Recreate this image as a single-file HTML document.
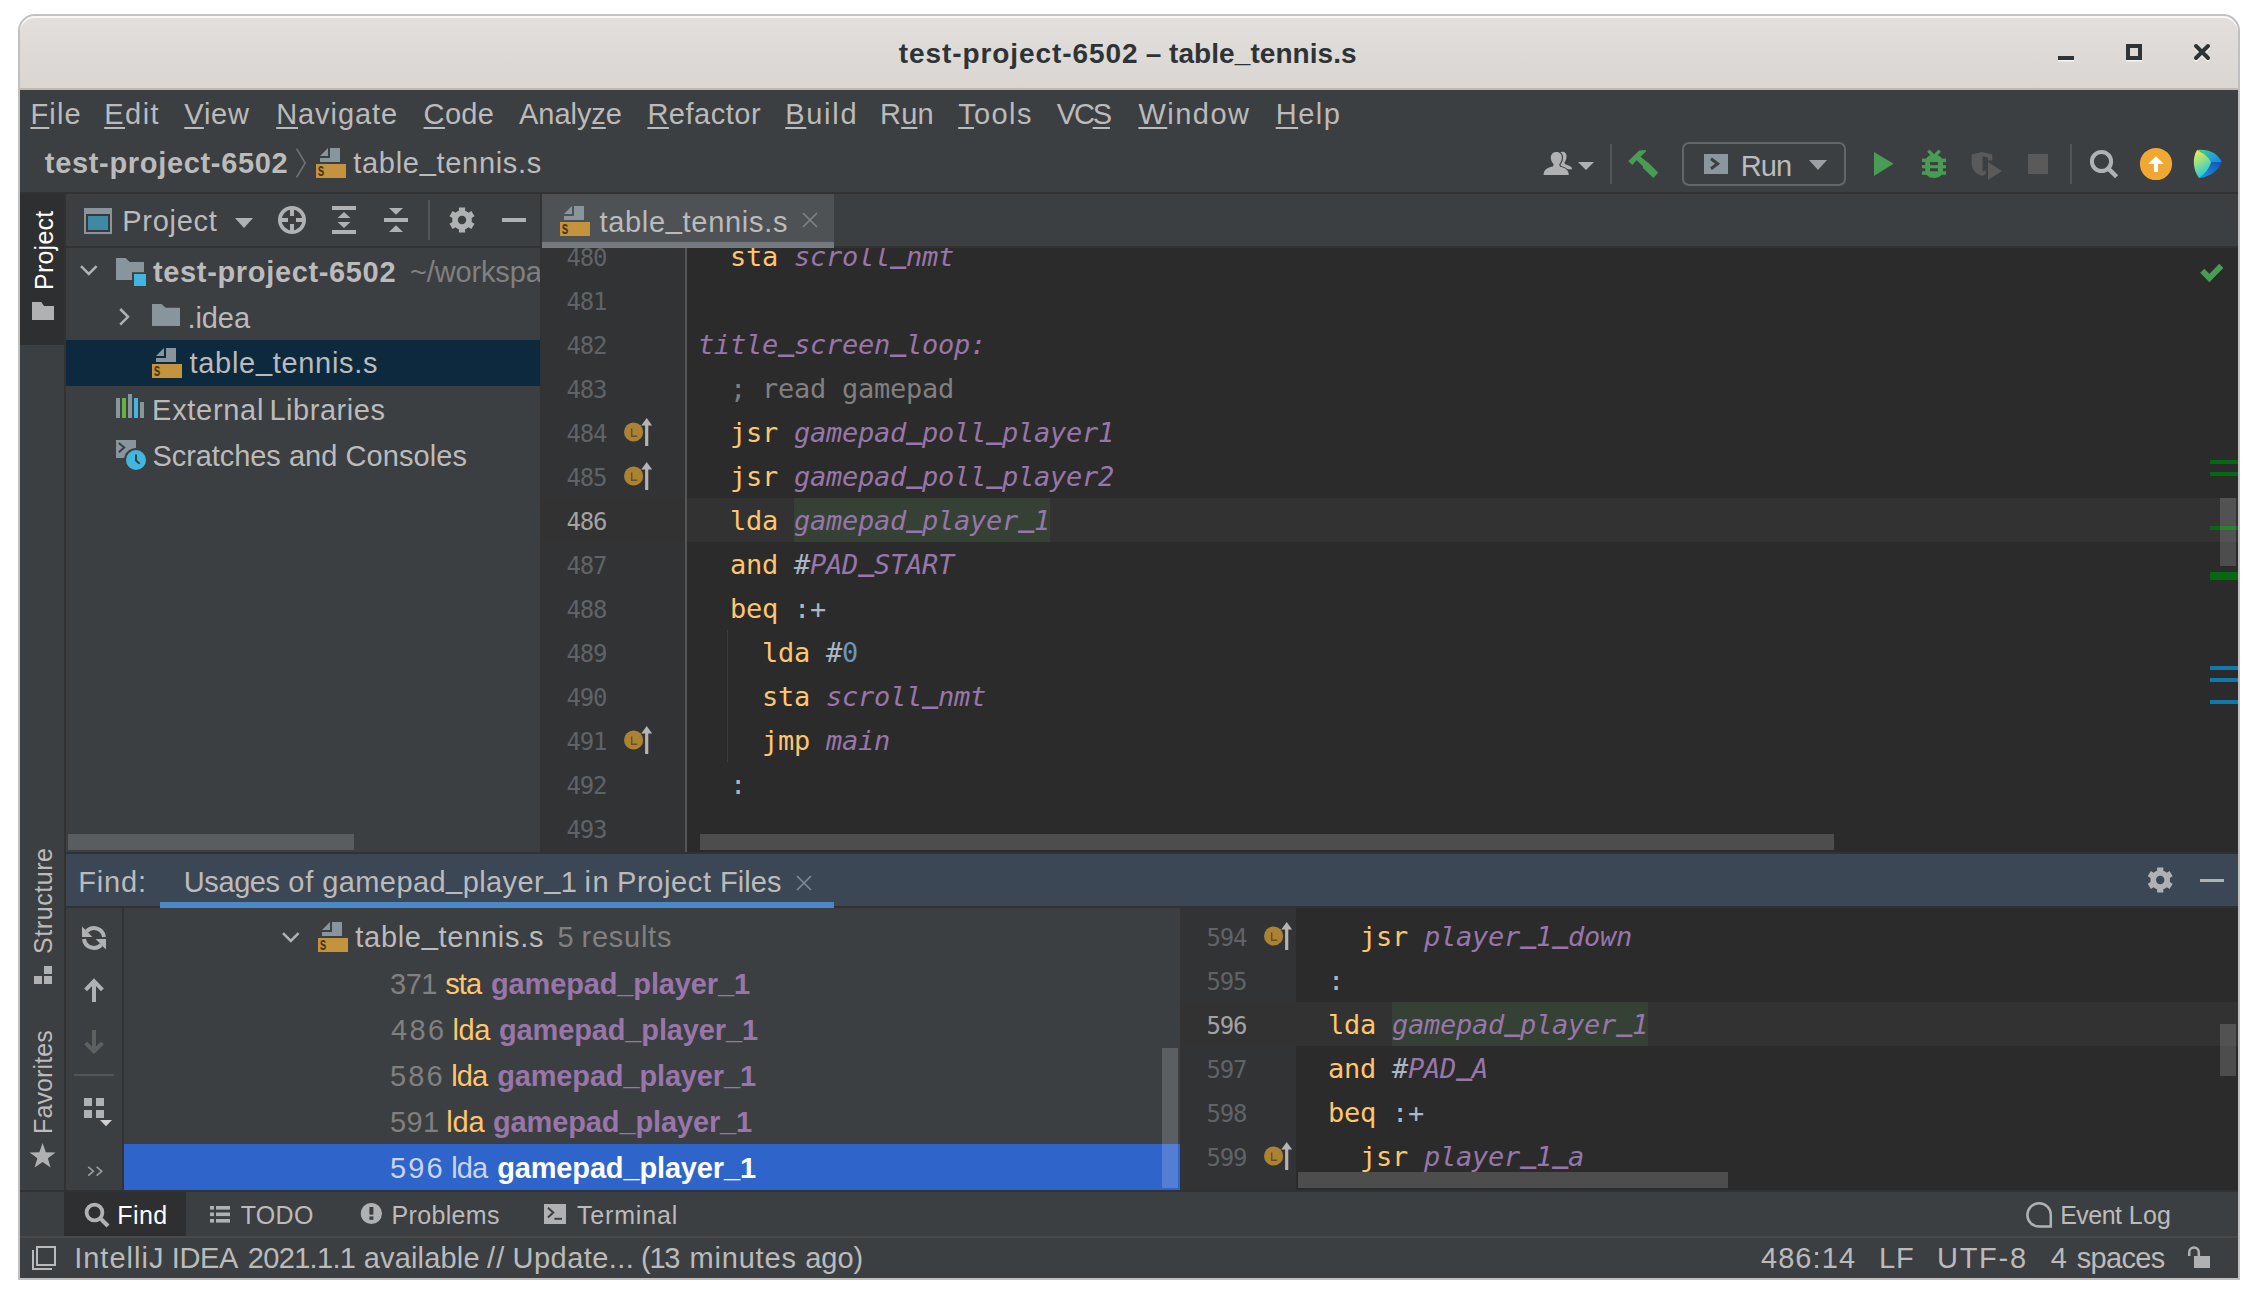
<!DOCTYPE html>
<html lang="en"><head><meta charset="utf-8"><title>test-project-6502 – table_tennis.s</title>
<style>
html,body{margin:0;padding:0;background:#fff;}
body{width:2258px;height:1298px;position:relative;overflow:hidden;font-family:"Liberation Sans", sans-serif;}
.r,.t,.i,.c{position:absolute;}
.t{white-space:pre;line-height:1;}
.t u{text-decoration:underline;text-decoration-thickness:2px;text-underline-offset:3px;}
.us{position:relative;top:-3.5px;}
.ub{position:relative;top:-1px;}
.um{position:relative;top:-2.5px;font-weight:bold;}
.i{overflow:visible;}
.c{overflow:hidden;}
</style></head>
<body>
<div class="r" style="left:18px;top:14px;width:2222px;height:1266px;background:#c0c0c0;border-radius:17px 17px 0 0;"></div>
<div class="r" style="left:20px;top:16px;width:2218px;height:72px;border-radius:15px 15px 0 0;background:linear-gradient(#e2dfdc,#dad6d2);box-shadow:inset 0 2px 0 #f8f7f6;"></div>
<div class="r" style="left:20px;top:88px;width:2218px;height:2px;background:#c0b9b0;"></div>
<div class="r" style="left:20px;top:90px;width:2218px;height:1188px;background:#3c3f41;"></div>
<span class="t" style="font-size:28px;color:#2e3436;font-weight:bold;letter-spacing:0.912px;left:898.80px;top:40.20px;">test-project-6502</span>
<span class="t" style="font-size:28px;color:#2e3436;font-weight:bold;left:1145.70px;top:40.20px;">–</span>
<span class="t" style="font-size:28px;color:#2e3436;font-weight:bold;letter-spacing:0.072px;left:1169.00px;top:40.20px;">table<span class="ub">_</span>tennis.s</span>
<svg class="i" style="left:0;top:0" width="2258" height="1298" viewBox="0 0 2258 1298"><rect x="2058" y="57.5" width="16" height="4" fill="#f7f6f5"/><rect x="2058" y="56" width="16" height="4" fill="#2e3436"/><rect x="2128" y="47.5" width="12" height="12" fill="none" stroke="#f7f6f5" stroke-width="4"/><rect x="2128" y="46" width="12" height="12" fill="#dedbd7" stroke="#2e3436" stroke-width="4"/><path d="M2196,47.5 L2208,59.5 M2208,47.5 L2196,59.5" stroke="#f7f6f5" stroke-width="4" stroke-linecap="round"/><path d="M2196,46 L2208,58 M2208,46 L2196,58" stroke="#2e3436" stroke-width="4" stroke-linecap="round"/></svg>
<span class="t" style="font-size:29px;color:#bbbbbb;letter-spacing:1.167px;left:30.40px;top:99.50px;"><u>F</u>ile</span>
<span class="t" style="font-size:29px;color:#bbbbbb;letter-spacing:1.495px;left:104.20px;top:99.50px;"><u>E</u>dit</span>
<span class="t" style="font-size:29px;color:#bbbbbb;letter-spacing:0.77px;left:184.30px;top:99.50px;"><u>V</u>iew</span>
<span class="t" style="font-size:29px;color:#bbbbbb;letter-spacing:0.925px;left:276.20px;top:99.50px;"><u>N</u>avigate</span>
<span class="t" style="font-size:29px;color:#bbbbbb;letter-spacing:0.333px;left:423.60px;top:99.50px;"><u>C</u>ode</span>
<span class="t" style="font-size:29px;color:#bbbbbb;letter-spacing:-0.04px;left:519.00px;top:99.50px;">Analy<u>z</u>e</span>
<span class="t" style="font-size:29px;color:#bbbbbb;letter-spacing:0.523px;left:647.40px;top:99.50px;"><u>R</u>efactor</span>
<span class="t" style="font-size:29px;color:#bbbbbb;letter-spacing:1.711px;left:785.20px;top:99.50px;"><u>B</u>uild</span>
<span class="t" style="font-size:29px;color:#bbbbbb;letter-spacing:0.114px;left:880.10px;top:99.50px;">R<u>u</u>n</span>
<span class="t" style="font-size:29px;color:#bbbbbb;letter-spacing:1.375px;left:958.20px;top:99.50px;"><u>T</u>ools</span>
<span class="t" style="font-size:29px;color:#bbbbbb;letter-spacing:-2.143px;left:1056.70px;top:99.50px;">VC<u>S</u></span>
<span class="t" style="font-size:29px;color:#bbbbbb;letter-spacing:1.48px;left:1138.40px;top:99.50px;"><u>W</u>indow</span>
<span class="t" style="font-size:29px;color:#bbbbbb;letter-spacing:1.495px;left:1275.70px;top:99.50px;"><u>H</u>elp</span>
<span class="t" style="font-size:29px;color:#bbbbbb;font-weight:bold;letter-spacing:0.678px;left:44.80px;top:149.00px;">test-project-6502</span>
<svg class="i" style="left:0;top:0" width="2258" height="1298" viewBox="0 0 2258 1298"><path d="M296.6,148.6 L305.2,163 L296.6,177.4" fill="none" stroke="#6c7378" stroke-width="1.6"/></svg>
<svg class="i" style="left:316px;top:148px;" width="30" height="30" viewBox="0 0 30 30"><path d="M14,0 H24 V14 H4 V10 H14 Z" fill="#89959d"/><path d="M4,8 L12,0 V8 Z" fill="#89959d"/><rect x="0" y="16" width="30" height="14" fill="#c4933e"/><text x="1.7" y="27.8" font-family="Liberation Sans, sans-serif" font-weight="bold" font-size="17.5" textLength="6.6" lengthAdjust="spacingAndGlyphs" fill="#4a3714">s</text></svg>
<span class="t" style="font-size:29px;color:#bbbbbb;letter-spacing:0.696px;left:353.30px;top:149.00px;">table<span class="us">_</span>tennis.s</span>
<svg class="i" style="left:0;top:0" width="2258" height="1298" viewBox="0 0 2258 1298"><path d="M1559.5,152.6 C1560.8,151.9 1562,151.7 1563,151.8 C1565.6,152 1566.8,154.2 1566.5,157.2 C1566.3,159.2 1565.6,161 1564.6,162.4 C1564.4,163.6 1565,164.2 1566,164.6 C1570,165.8 1572.1,167 1572.1,169.2 L1560,169.2 Z" fill="#afb1b3"/><path d="M1543.6,175 C1543.6,170.2 1546.5,168.2 1552.6,166.6 C1553.8,165.8 1553.8,164.6 1553.1,163.6 C1551.3,161.6 1550.6,158.8 1550.8,156.8 C1551.1,153.8 1553.4,152 1556.3,152 C1559.3,152 1561.7,154 1561.9,157 C1562.1,159.5 1561.1,162 1559.6,163.8 C1559.1,165 1559.3,166 1560.3,166.8 C1565.4,168 1568.8,170 1568.8,175 Z" fill="#afb1b3" stroke="#3c3f41" stroke-width="2.4" paint-order="stroke"/><path d="M1578,162 H1594 L1586,170 Z" fill="#afb1b3"/><rect x="1610" y="144" width="2" height="40" fill="#555555"/><path d="M1628.3,161 L1639.2,150.4 L1646.1,149.9 L1645.8,151.5 L1640.6,156.7 L1647.3,162.2 L1648.7,163 L1658.2,172.8 L1653.3,178 L1643.2,168.2 L1642.9,166.2 L1636.6,160.2 L1632.3,165 Z" fill="#499c54"/><rect x="1683" y="143" width="162" height="42" rx="6" ry="6" fill="none" stroke="#646768" stroke-width="2"/><rect x="1704" y="154" width="24" height="20" fill="#8a979f"/><path d="M1711,158.8 L1717.6,163.8 L1711,168.8" fill="none" stroke="#3c3f41" stroke-width="3"/><path d="M1809,160 H1827 L1818,170 Z" fill="#9da0a4"/><path d="M1874,152 V176 L1893.6,163.8 Z" fill="#499c54"/><path d="M1928.4,150.6 L1934,156.6 L1939.7,150.6" fill="none" stroke="#499c54" stroke-width="3.3"/><path d="M1925.2,163.6 C1925.2,157.6 1929,154.6 1934,154.6 C1939,154.6 1943,157.6 1943,163.6 L1943,170 C1943,175 1939,178 1934,178 C1929,178 1925.2,175 1925.2,170 Z" fill="#499c54"/><rect x="1922" y="158.6" width="24" height="3.5" fill="#499c54"/><rect x="1922" y="165.1" width="24" height="3.2" fill="#499c54"/><rect x="1922" y="171.3" width="24" height="3.5" fill="#499c54"/><rect x="1930" y="162.1" width="8" height="3" fill="#3c3f41"/><rect x="1930" y="168.3" width="8" height="3" fill="#3c3f41"/><path d="M1971.7,154.4 L1982,152 L1992.2,154.4 L1992.2,160.4 L1988,160.4 L1988,157.4 L1982.5,156.3 L1982.5,171.5 L1985.8,170 L1985.8,174 L1982,176 C1975,173.5 1971.7,169 1971.7,164 Z" fill="#5a5a5a"/><path d="M1988,162 V180 L2001.8,171 Z" fill="#5a5a5a"/><rect x="2028" y="154" width="20" height="20" fill="#5a5a5a"/><rect x="2070" y="144" width="2" height="40" fill="#555555"/><circle cx="2101.5" cy="161.5" r="9.6" fill="none" stroke="#afb1b3" stroke-width="4"/><path d="M2108.4,168.6 L2116.6,176.8" stroke="#afb1b3" stroke-width="4.4"/><circle cx="2156" cy="164" r="16.1" fill="#f1a832"/><path d="M2148,164 L2156,156.2 L2164,164 H2158 V172 H2154 V164 Z" fill="#ffffff"/><defs><linearGradient id="lg1" x1="0" y1="0" x2="0.4" y2="1"><stop offset="0" stop-color="#f9f047"/><stop offset="0.5" stop-color="#8fdf8a"/><stop offset="1" stop-color="#21c8e8"/></linearGradient><linearGradient id="lg2" x1="0" y1="0" x2="1" y2="0.6"><stop offset="0" stop-color="#3ddc84"/><stop offset="1" stop-color="#168df0"/></linearGradient><linearGradient id="lg3" x1="1" y1="0" x2="0" y2="1"><stop offset="0" stop-color="#1a4fb5"/><stop offset="1" stop-color="#169be6"/></linearGradient></defs><path d="M2197,150 C2210,149 2218,154 2221.8,162 L2211,162 C2208,156 2203,152.5 2197,150 Z" fill="url(#lg2)"/><path d="M2221.8,162 C2218,171 2210,177 2199,178 C2205,174 2209.5,168.5 2211,162 Z" fill="url(#lg3)"/><path d="M2197,150 C2203,152.5 2209,157 2211,162 C2209.5,168.5 2205,174 2199,178 C2193,170 2192,158 2197,150 Z" fill="url(#lg1)"/></svg>
<span class="t" style="font-size:29px;color:#bbbbbb;letter-spacing:-0.836px;left:1740.70px;top:151.60px;">Run</span>
<div class="r" style="left:20px;top:192px;width:2218px;height:2px;background:#323232;"></div>
<div class="r" style="left:66px;top:340px;width:474px;height:46px;background:#0d293e;"></div>
<svg class="i" style="left:0;top:0" width="2258" height="1298" viewBox="0 0 2258 1298"><path d="M81.0,266.2 L88.8,274 L96.6,266.2" fill="none" stroke="#afb1b3" stroke-width="2.5"/></svg>
<svg class="i" style="left:116px;top:258px;" width="30" height="28" viewBox="0 0 30 28"><path d="M0,0 H9.5 L13.7,4 H28 V14.2 H16 V22 H0 Z" fill="#89959d"/><rect x="18" y="16" width="12" height="12" fill="#40b6e0"/></svg>
<span class="t" style="font-size:29px;color:#bbbbbb;font-weight:bold;letter-spacing:0.653px;left:153.00px;top:257.50px;">test-project-6502</span>
<span class="t" style="font-size:29px;color:#808080;letter-spacing:-0.148px;left:410.00px;top:257.50px;">~/workspace</span>
<svg class="i" style="left:0;top:0" width="2258" height="1298" viewBox="0 0 2258 1298"><path d="M120.2,309.0 L128,316.8 L120.2,324.6" fill="none" stroke="#afb1b3" stroke-width="2.5"/></svg>
<svg class="i" style="left:152px;top:304px;" width="28" height="22" viewBox="0 0 28 22"><path d="M0,0 H9.5 L13.7,3.8 H28 V22 H0 Z" fill="#89959d"/></svg>
<span class="t" style="font-size:29px;color:#bbbbbb;letter-spacing:-0.089px;left:187.50px;top:304.00px;">.idea</span>
<svg class="i" style="left:152px;top:348px;" width="30" height="30" viewBox="0 0 30 30"><path d="M14,0 H24 V14 H4 V10 H14 Z" fill="#89959d"/><path d="M4,8 L12,0 V8 Z" fill="#89959d"/><rect x="0" y="16" width="30" height="14" fill="#c4933e"/><text x="1.7" y="27.8" font-family="Liberation Sans, sans-serif" font-weight="bold" font-size="17.5" textLength="6.6" lengthAdjust="spacingAndGlyphs" fill="#4a3714">s</text></svg>
<span class="t" style="font-size:29px;color:#bbbbbb;letter-spacing:0.696px;left:189.50px;top:349.00px;">table<span class="us">_</span>tennis.s</span>
<svg class="i" style="left:0;top:0" width="2258" height="1298" viewBox="0 0 2258 1298"><rect x="116" y="398" width="4" height="20" fill="#89959d"/><rect x="122" y="398" width="4" height="20" fill="#62b543"/><rect x="128" y="394" width="4" height="24" fill="#89959d"/><rect x="134" y="398" width="4" height="20" fill="#40b6e0"/><rect x="140" y="402" width="4" height="16" fill="#89959d"/></svg>
<span class="t" style="font-size:29px;color:#bbbbbb;letter-spacing:0.694px;left:152.10px;top:396.30px;">External</span>
<span class="t" style="font-size:29px;color:#bbbbbb;letter-spacing:0.536px;left:269.40px;top:396.30px;">Libraries</span>
<svg class="i" style="left:0;top:0" width="2258" height="1298" viewBox="0 0 2258 1298"><rect x="116" y="440" width="20" height="18" fill="#89959d"/><path d="M118.8,443 L124.2,447.6 L118.8,452.2" fill="none" stroke="#3c3f41" stroke-width="2"/><circle cx="136" cy="460" r="12" fill="#3c3f41"/><circle cx="136" cy="460" r="10" fill="#40b6e0"/><path d="M136,454.6 V460.6 L139.6,463.8" fill="none" stroke="#3c3f41" stroke-width="2"/></svg>
<span class="t" style="font-size:29px;color:#bbbbbb;letter-spacing:-0.093px;left:152.50px;top:441.50px;">Scratches</span>
<span class="t" style="font-size:29px;color:#bbbbbb;letter-spacing:-0.028px;left:289.00px;top:441.50px;">and</span>
<span class="t" style="font-size:29px;color:#bbbbbb;letter-spacing:0.1px;left:345.40px;top:441.50px;">Consoles</span>
<div class="r" style="left:68px;top:834px;width:286px;height:16px;background:#5a5d5f;"></div>
<div class="r" style="left:540px;top:194px;width:2px;height:658px;background:#323232;"></div>
<div class="r" style="left:542px;top:248px;width:144px;height:604px;background:#313335;"></div>
<div class="r" style="left:686px;top:248px;width:1552px;height:604px;background:#2b2b2b;"></div>
<div class="r" style="left:685px;top:248px;width:2px;height:604px;background:#555555;"></div>
<div class="r" style="left:542px;top:498px;width:143px;height:44px;background:#323232;"></div>
<div class="r" style="left:687px;top:498px;width:1551px;height:44px;background:#323232;"></div>
<div class="r" style="left:794px;top:498px;width:256px;height:44px;background:#344134;"></div>
<div class="r" style="left:727px;top:630px;width:1px;height:132px;background:#3b3b3b;"></div>
<span class="t" style="font-size:24px;color:#606366;font-family:'DejaVu Sans Mono', 'Liberation Mono', monospace;letter-spacing:-1.199px;left:566.50px;top:245.60px;">480</span>
<span class="t" style="font-size:27px;color:#ffc66d;font-family:'DejaVu Sans Mono', 'Liberation Mono', monospace;letter-spacing:-0.255px;left:730.00px;top:242.50px;">sta</span>
<span class="t" style="font-size:27px;color:#9876aa;font-family:'DejaVu Sans Mono', 'Liberation Mono', monospace;font-style:italic;letter-spacing:-0.255px;left:794.00px;top:242.50px;">scroll<span class="um">_</span>nmt</span>
<span class="t" style="font-size:24px;color:#606366;font-family:'DejaVu Sans Mono', 'Liberation Mono', monospace;letter-spacing:-1.199px;left:566.50px;top:289.60px;">481</span>
<span class="t" style="font-size:24px;color:#606366;font-family:'DejaVu Sans Mono', 'Liberation Mono', monospace;letter-spacing:-1.199px;left:566.50px;top:333.60px;">482</span>
<span class="t" style="font-size:27px;color:#9876aa;font-family:'DejaVu Sans Mono', 'Liberation Mono', monospace;font-style:italic;letter-spacing:-0.255px;left:698.00px;top:330.50px;">title<span class="um">_</span>screen<span class="um">_</span>loop:</span>
<span class="t" style="font-size:24px;color:#606366;font-family:'DejaVu Sans Mono', 'Liberation Mono', monospace;letter-spacing:-1.199px;left:566.50px;top:377.60px;">483</span>
<span class="t" style="font-size:27px;color:#808080;font-family:'DejaVu Sans Mono', 'Liberation Mono', monospace;letter-spacing:-0.255px;left:730.00px;top:374.50px;">; read gamepad</span>
<span class="t" style="font-size:24px;color:#606366;font-family:'DejaVu Sans Mono', 'Liberation Mono', monospace;letter-spacing:-1.199px;left:566.50px;top:421.60px;">484</span>
<span class="t" style="font-size:27px;color:#ffc66d;font-family:'DejaVu Sans Mono', 'Liberation Mono', monospace;letter-spacing:-0.255px;left:730.00px;top:418.50px;">jsr</span>
<span class="t" style="font-size:27px;color:#9876aa;font-family:'DejaVu Sans Mono', 'Liberation Mono', monospace;font-style:italic;letter-spacing:-0.255px;left:794.00px;top:418.50px;">gamepad<span class="um">_</span>poll<span class="um">_</span>player1</span>
<span class="t" style="font-size:24px;color:#606366;font-family:'DejaVu Sans Mono', 'Liberation Mono', monospace;letter-spacing:-1.199px;left:566.50px;top:465.60px;">485</span>
<span class="t" style="font-size:27px;color:#ffc66d;font-family:'DejaVu Sans Mono', 'Liberation Mono', monospace;letter-spacing:-0.255px;left:730.00px;top:462.50px;">jsr</span>
<span class="t" style="font-size:27px;color:#9876aa;font-family:'DejaVu Sans Mono', 'Liberation Mono', monospace;font-style:italic;letter-spacing:-0.255px;left:794.00px;top:462.50px;">gamepad<span class="um">_</span>poll<span class="um">_</span>player2</span>
<span class="t" style="font-size:24px;color:#a4a3a3;font-family:'DejaVu Sans Mono', 'Liberation Mono', monospace;letter-spacing:-1.199px;left:566.50px;top:509.60px;">486</span>
<span class="t" style="font-size:27px;color:#ffc66d;font-family:'DejaVu Sans Mono', 'Liberation Mono', monospace;letter-spacing:-0.255px;left:730.00px;top:506.50px;">lda</span>
<span class="t" style="font-size:27px;color:#9876aa;font-family:'DejaVu Sans Mono', 'Liberation Mono', monospace;font-style:italic;letter-spacing:-0.255px;left:794.00px;top:506.50px;">gamepad<span class="um">_</span>player<span class="um">_</span>1</span>
<span class="t" style="font-size:24px;color:#606366;font-family:'DejaVu Sans Mono', 'Liberation Mono', monospace;letter-spacing:-1.199px;left:566.50px;top:553.60px;">487</span>
<span class="t" style="font-size:27px;color:#ffc66d;font-family:'DejaVu Sans Mono', 'Liberation Mono', monospace;letter-spacing:-0.255px;left:730.00px;top:550.50px;">and</span>
<span class="t" style="font-size:27px;color:#a9b7c6;font-family:'DejaVu Sans Mono', 'Liberation Mono', monospace;letter-spacing:-0.255px;left:794.00px;top:550.50px;">#</span>
<span class="t" style="font-size:27px;color:#9876aa;font-family:'DejaVu Sans Mono', 'Liberation Mono', monospace;font-style:italic;letter-spacing:-0.255px;left:810.00px;top:550.50px;">PAD<span class="um">_</span>START</span>
<span class="t" style="font-size:24px;color:#606366;font-family:'DejaVu Sans Mono', 'Liberation Mono', monospace;letter-spacing:-1.199px;left:566.50px;top:597.60px;">488</span>
<span class="t" style="font-size:27px;color:#ffc66d;font-family:'DejaVu Sans Mono', 'Liberation Mono', monospace;letter-spacing:-0.255px;left:730.00px;top:594.50px;">beq</span>
<span class="t" style="font-size:27px;color:#a9b7c6;font-family:'DejaVu Sans Mono', 'Liberation Mono', monospace;letter-spacing:-0.255px;left:794.00px;top:594.50px;">:+</span>
<span class="t" style="font-size:24px;color:#606366;font-family:'DejaVu Sans Mono', 'Liberation Mono', monospace;letter-spacing:-1.199px;left:566.50px;top:641.60px;">489</span>
<span class="t" style="font-size:27px;color:#ffc66d;font-family:'DejaVu Sans Mono', 'Liberation Mono', monospace;letter-spacing:-0.255px;left:762.00px;top:638.50px;">lda</span>
<span class="t" style="font-size:27px;color:#a9b7c6;font-family:'DejaVu Sans Mono', 'Liberation Mono', monospace;letter-spacing:-0.255px;left:826.00px;top:638.50px;">#</span>
<span class="t" style="font-size:27px;color:#6897bb;font-family:'DejaVu Sans Mono', 'Liberation Mono', monospace;letter-spacing:-0.255px;left:842.00px;top:638.50px;">0</span>
<span class="t" style="font-size:24px;color:#606366;font-family:'DejaVu Sans Mono', 'Liberation Mono', monospace;letter-spacing:-1.199px;left:566.50px;top:685.60px;">490</span>
<span class="t" style="font-size:27px;color:#ffc66d;font-family:'DejaVu Sans Mono', 'Liberation Mono', monospace;letter-spacing:-0.255px;left:762.00px;top:682.50px;">sta</span>
<span class="t" style="font-size:27px;color:#9876aa;font-family:'DejaVu Sans Mono', 'Liberation Mono', monospace;font-style:italic;letter-spacing:-0.255px;left:826.00px;top:682.50px;">scroll<span class="um">_</span>nmt</span>
<span class="t" style="font-size:24px;color:#606366;font-family:'DejaVu Sans Mono', 'Liberation Mono', monospace;letter-spacing:-1.199px;left:566.50px;top:729.60px;">491</span>
<span class="t" style="font-size:27px;color:#ffc66d;font-family:'DejaVu Sans Mono', 'Liberation Mono', monospace;letter-spacing:-0.255px;left:762.00px;top:726.50px;">jmp</span>
<span class="t" style="font-size:27px;color:#9876aa;font-family:'DejaVu Sans Mono', 'Liberation Mono', monospace;font-style:italic;letter-spacing:-0.255px;left:826.00px;top:726.50px;">main</span>
<span class="t" style="font-size:24px;color:#606366;font-family:'DejaVu Sans Mono', 'Liberation Mono', monospace;letter-spacing:-1.199px;left:566.50px;top:773.60px;">492</span>
<span class="t" style="font-size:27px;color:#a9b7c6;font-family:'DejaVu Sans Mono', 'Liberation Mono', monospace;letter-spacing:-0.255px;left:730.00px;top:770.50px;">:</span>
<span class="t" style="font-size:24px;color:#606366;font-family:'DejaVu Sans Mono', 'Liberation Mono', monospace;letter-spacing:-1.199px;left:566.50px;top:817.60px;">493</span>
<svg class="i" style="left:0;top:0" width="2258" height="1298" viewBox="0 0 2258 1298"><circle cx="633.6" cy="432" r="9.6" fill="#ab8233"/><path d="M631.7,428.6 V436.2 H637.2" fill="none" stroke="#65501f" stroke-width="1.4"/><rect x="645.1" y="423" width="3.2" height="23" fill="#b4b4b4"/><path d="M641.3000000000001,425.6 L646.7,418 L652.1,425.6 Z" fill="#b4b4b4"/></svg>
<svg class="i" style="left:0;top:0" width="2258" height="1298" viewBox="0 0 2258 1298"><circle cx="633.6" cy="476" r="9.6" fill="#ab8233"/><path d="M631.7,472.6 V480.2 H637.2" fill="none" stroke="#65501f" stroke-width="1.4"/><rect x="645.1" y="467" width="3.2" height="23" fill="#b4b4b4"/><path d="M641.3000000000001,469.6 L646.7,462 L652.1,469.6 Z" fill="#b4b4b4"/></svg>
<svg class="i" style="left:0;top:0" width="2258" height="1298" viewBox="0 0 2258 1298"><circle cx="633.6" cy="740" r="9.6" fill="#ab8233"/><path d="M631.7,736.6 V744.2 H637.2" fill="none" stroke="#65501f" stroke-width="1.4"/><rect x="645.1" y="731" width="3.2" height="23" fill="#b4b4b4"/><path d="M641.3000000000001,733.6 L646.7,726 L652.1,733.6 Z" fill="#b4b4b4"/></svg>
<div class="r" style="left:700px;top:834px;width:1134px;height:16px;background:#4d4d4d;"></div>
<div class="r" style="left:2210px;top:460px;width:28px;height:4px;background:#076812;"></div>
<div class="r" style="left:2210px;top:472px;width:28px;height:4px;background:#076812;"></div>
<div class="r" style="left:2210px;top:526px;width:28px;height:4px;background:#076812;"></div>
<div class="r" style="left:2210px;top:572px;width:28px;height:8px;background:#076812;"></div>
<div class="r" style="left:2210px;top:666px;width:28px;height:4px;background:#0d7aab;"></div>
<div class="r" style="left:2210px;top:678px;width:28px;height:4px;background:#0d7aab;"></div>
<div class="r" style="left:2210px;top:700px;width:28px;height:4px;background:#0d7aab;"></div>
<div class="r" style="left:2220px;top:498px;width:16px;height:68px;background:rgba(255,255,255,0.16);"></div>
<svg class="i" style="left:0;top:0" width="2258" height="1298" viewBox="0 0 2258 1298"><path d="M2202.3,270.7 L2209.4,278 L2221.3,265.9" fill="none" stroke="#499c54" stroke-width="5.8"/></svg>
<div class="r" style="left:66px;top:194px;width:474px;height:52px;background:#3c3f41;"></div>
<div class="r" style="left:66px;top:246px;width:474px;height:2px;background:#323232;"></div>
<div class="r" style="left:542px;top:194px;width:1696px;height:52px;background:#3c3f41;"></div>
<div class="r" style="left:542px;top:246px;width:1696px;height:2px;background:#323232;"></div>
<div class="r" style="left:542px;top:194px;width:292px;height:54px;background:#4e5254;"></div>
<div class="r" style="left:542px;top:242px;width:292px;height:6px;background:#747a80;"></div>
<svg class="i" style="left:0;top:0" width="2258" height="1298" viewBox="0 0 2258 1298"><rect x="84" y="208" width="28" height="26" fill="#89959d"/><rect x="86" y="214" width="24" height="18" fill="#39393b"/><rect x="88" y="216" width="20" height="14" fill="#3e89a3"/><path d="M235,218 H253 L244,228 Z" fill="#afb1b3"/><circle cx="292" cy="220" r="12.2" fill="none" stroke="#afb1b3" stroke-width="3.6"/><rect x="290" y="207" width="4" height="9" fill="#afb1b3"/><rect x="290" y="224" width="4" height="9" fill="#afb1b3"/><rect x="279" y="218" width="9" height="4" fill="#afb1b3"/><rect x="296" y="218" width="9" height="4" fill="#afb1b3"/><rect x="332" y="206" width="24" height="4" fill="#afb1b3"/><rect x="332" y="230" width="24" height="4" fill="#afb1b3"/><path d="M337.6,218 L344,212 L350.4,218 Z M337.6,222 H350.4 L344,228 Z" fill="#afb1b3"/><rect x="384" y="218" width="24" height="4" fill="#afb1b3"/><path d="M389,208 H403 L396,214.8 Z M389,232 H403 L396,225.2 Z" fill="#afb1b3"/><rect x="428" y="200" width="2" height="40" fill="#555555"/><path d="M458.90,210.70 L458.90,207.38 L465.10,207.38 L465.10,210.70 A9.8,9.8 0 0 1 468.50,212.67 L468.50,212.67 L471.38,211.00 L474.48,216.37 L471.60,218.04 A9.8,9.8 0 0 1 471.60,221.96 L471.60,221.96 L474.48,223.63 L471.38,229.00 L468.50,227.33 A9.8,9.8 0 0 1 465.10,229.30 L465.10,229.30 L465.10,232.62 L458.90,232.62 L458.90,229.30 A9.8,9.8 0 0 1 455.50,227.33 L455.50,227.33 L452.62,229.00 L449.52,223.63 L452.40,221.96 A9.8,9.8 0 0 1 452.40,218.04 L452.40,218.04 L449.52,216.37 L452.62,211.00 L455.50,212.67 A9.8,9.8 0 0 1 458.90,210.70 Z M466.2,220 A4.2,4.2 0 1 0 457.8,220 A4.2,4.2 0 1 0 466.2,220 Z" fill="#afb1b3" fill-rule="evenodd"/><rect x="502" y="218" width="24" height="4" fill="#afb1b3"/></svg>
<span class="t" style="font-size:29px;color:#bbbbbb;letter-spacing:0.733px;left:122.20px;top:207.00px;">Project</span>
<svg class="i" style="left:560px;top:206px;" width="30" height="30" viewBox="0 0 30 30"><path d="M14,0 H24 V14 H4 V10 H14 Z" fill="#89959d"/><path d="M4,8 L12,0 V8 Z" fill="#89959d"/><rect x="0" y="16" width="30" height="14" fill="#c4933e"/><text x="1.7" y="27.8" font-family="Liberation Sans, sans-serif" font-weight="bold" font-size="17.5" textLength="6.6" lengthAdjust="spacingAndGlyphs" fill="#4a3714">s</text></svg>
<span class="t" style="font-size:29px;color:#bbbbbb;letter-spacing:0.696px;left:599.40px;top:207.60px;">table<span class="us">_</span>tennis.s</span>
<svg class="i" style="left:0;top:0" width="2258" height="1298" viewBox="0 0 2258 1298"><path d="M803,213 L817,227 M817,213 L803,227" stroke="#7f8384" stroke-width="1.6" fill="none"/></svg>
<div class="r" style="left:20px;top:194px;width:44px;height:998px;background:#3c3f41;"></div>
<div class="r" style="left:64px;top:194px;width:2px;height:998px;background:#323232;"></div>
<div class="r" style="left:20px;top:194px;width:44px;height:151px;background:#2d2f30;"></div>
<span class="t" style="font-size:25px;color:#ffffff;letter-spacing:0.24px;left:53.00px;top:266.60px;transform-origin:0 21.00px;transform:rotate(-90deg) translateX(-2.00px);">Project</span>
<svg class="i" style="left:0;top:0" width="2258" height="1298" viewBox="0 0 2258 1298"><path d="M32,302 H41.3 L44,306 H54 V320 H32 Z" fill="#afb1b3"/></svg>
<span class="t" style="font-size:25px;color:#bbbbbb;letter-spacing:0.572px;left:52.00px;top:931.60px;transform-origin:0 21.00px;transform:rotate(-90deg) translateX(-1.00px);">Structure</span>
<svg class="i" style="left:0;top:0" width="2258" height="1298" viewBox="0 0 2258 1298"><rect x="44" y="966" width="8" height="8" fill="#afb1b3"/><rect x="34" y="976" width="8" height="8" fill="#afb1b3"/><rect x="44" y="976" width="8" height="8" fill="#afb1b3"/></svg>
<span class="t" style="font-size:25px;color:#bbbbbb;letter-spacing:0.112px;left:52.00px;top:1111.20px;transform-origin:0 21.00px;transform:rotate(-90deg) translateX(-2.00px);">Favorites</span>
<svg class="i" style="left:0;top:0" width="2258" height="1298" viewBox="0 0 2258 1298"><polygon points="42.60,1143.00 39.37,1152.15 29.67,1152.40 37.37,1158.30 34.61,1167.60 42.60,1162.10 50.59,1167.60 47.83,1158.30 55.53,1152.40 45.83,1152.15" fill="#afb1b3"/></svg>
<div class="r" style="left:66px;top:852px;width:2172px;height:2px;background:#323232;"></div>
<div class="r" style="left:66px;top:854px;width:2172px;height:52px;background:#3c4755;"></div>
<div class="r" style="left:66px;top:906px;width:2172px;height:2px;background:#323232;"></div>
<div class="r" style="left:160px;top:902px;width:674px;height:6px;background:#4a88c7;"></div>
<span class="t" style="font-size:29px;color:#bbbbbb;letter-spacing:0.846px;left:78.20px;top:867.80px;">Find:</span>
<span class="t" style="font-size:29px;color:#bbbbbb;letter-spacing:-0.406px;left:183.80px;top:867.80px;">Usages</span>
<span class="t" style="font-size:29px;color:#bbbbbb;letter-spacing:0.772px;left:288.30px;top:867.80px;">of</span>
<span class="t" style="font-size:29px;color:#bbbbbb;letter-spacing:0.422px;left:322.20px;top:867.80px;">gamepad<span class="us">_</span>player<span class="us">_</span>1</span>
<span class="t" style="font-size:29px;color:#bbbbbb;letter-spacing:1.457px;left:584.50px;top:867.80px;">in</span>
<span class="t" style="font-size:29px;color:#bbbbbb;letter-spacing:0.6px;left:617.10px;top:867.80px;">Project</span>
<span class="t" style="font-size:29px;color:#bbbbbb;letter-spacing:0.118px;left:719.90px;top:867.80px;">Files</span>
<svg class="i" style="left:0;top:0" width="2258" height="1298" viewBox="0 0 2258 1298"><path d="M797,876 L811,890 M811,876 L797,890" stroke="#7f8b99" stroke-width="1.6" fill="none"/></svg>
<svg class="i" style="left:0;top:0" width="2258" height="1298" viewBox="0 0 2258 1298"><path d="M2157.10,870.70 L2157.10,867.38 L2163.30,867.38 L2163.30,870.70 A9.8,9.8 0 0 1 2166.70,872.67 L2166.70,872.67 L2169.58,871.00 L2172.68,876.37 L2169.80,878.04 A9.8,9.8 0 0 1 2169.80,881.96 L2169.80,881.96 L2172.68,883.63 L2169.58,889.00 L2166.70,887.33 A9.8,9.8 0 0 1 2163.30,889.30 L2163.30,889.30 L2163.30,892.62 L2157.10,892.62 L2157.10,889.30 A9.8,9.8 0 0 1 2153.70,887.33 L2153.70,887.33 L2150.82,889.00 L2147.72,883.63 L2150.60,881.96 A9.8,9.8 0 0 1 2150.60,878.04 L2150.60,878.04 L2147.72,876.37 L2150.82,871.00 L2153.70,872.67 A9.8,9.8 0 0 1 2157.10,870.70 Z M2164.3999999999996,880 A4.2,4.2 0 1 0 2156.0,880 A4.2,4.2 0 1 0 2164.3999999999996,880 Z" fill="#afb1b3" fill-rule="evenodd"/></svg>
<div class="r" style="left:2200px;top:879px;width:24px;height:3px;background:#afb1b3;"></div>
<div class="r" style="left:122px;top:908px;width:2px;height:282px;background:#323232;"></div>
<svg class="i" style="left:0;top:0" width="2258" height="1298" viewBox="0 0 2258 1298"><path d="M86.6,931.4 A10,10 0 0 1 104,937" fill="none" stroke="#afb1b3" stroke-width="4"/><path d="M101.4,944.6 A10,10 0 0 1 84,939" fill="none" stroke="#afb1b3" stroke-width="4"/><path d="M82,926.6 V937 H92.4 Z" fill="#afb1b3"/><path d="M106,949.4 V939 H95.6 Z" fill="#afb1b3"/><rect x="92" y="981" width="4" height="21" fill="#afb1b3"/><path d="M85.6,989.8 L94,981.2 L102.4,989.8" fill="none" stroke="#afb1b3" stroke-width="4"/><rect x="92" y="1030" width="4" height="21" fill="#5e6060"/><path d="M85.6,1042.8 L94,1051.4 L102.4,1042.8" fill="none" stroke="#5e6060" stroke-width="4"/><rect x="74" y="1074" width="40" height="2" fill="#555555"/><rect x="84" y="1098" width="8" height="8" fill="#afb1b3"/><rect x="96" y="1098" width="8" height="8" fill="#afb1b3"/><rect x="84" y="1110" width="8" height="8" fill="#afb1b3"/><rect x="96" y="1110" width="8" height="8" fill="#afb1b3"/><path d="M100,1120 H112 L106,1126.2 Z" fill="#d0d0d0"/><path d="M88.2,1166.8 L93.4,1171.2 L88.2,1175.6 M96.6,1166.8 L101.8,1171.2 L96.6,1175.6" fill="none" stroke="#9a9da0" stroke-width="1.6"/></svg>
<div class="r" style="left:124px;top:1144px;width:1056px;height:46px;background:#2f65ca;"></div>
<svg class="i" style="left:0;top:0" width="2258" height="1298" viewBox="0 0 2258 1298"><path d="M283.0,933.2 L290.8,941 L298.6,933.2" fill="none" stroke="#afb1b3" stroke-width="2.5"/></svg>
<svg class="i" style="left:318px;top:922px;" width="30" height="30" viewBox="0 0 30 30"><path d="M14,0 H24 V14 H4 V10 H14 Z" fill="#89959d"/><path d="M4,8 L12,0 V8 Z" fill="#89959d"/><rect x="0" y="16" width="30" height="14" fill="#c4933e"/><text x="1.7" y="27.8" font-family="Liberation Sans, sans-serif" font-weight="bold" font-size="17.5" textLength="6.6" lengthAdjust="spacingAndGlyphs" fill="#4a3714">s</text></svg>
<span class="t" style="font-size:29px;color:#bbbbbb;letter-spacing:0.703px;left:355.30px;top:923.40px;">table<span class="us">_</span>tennis.s</span>
<span class="t" style="font-size:29px;color:#808080;left:557.60px;top:923.40px;">5</span>
<span class="t" style="font-size:29px;color:#808080;letter-spacing:0.731px;left:581.60px;top:923.40px;">results</span>
<span class="t" style="font-size:29px;color:#808080;letter-spacing:-0.478px;left:390.00px;top:969.70px;">371</span>
<span class="t" style="font-size:29px;color:#ffc66d;letter-spacing:-0.829px;left:445.20px;top:969.70px;">sta</span>
<span class="t" style="font-size:29px;color:#9876aa;font-weight:bold;letter-spacing:-0.141px;left:491.00px;top:969.70px;">gamepad<span class="ub">_</span>player<span class="ub">_</span>1</span>
<span class="t" style="font-size:29px;color:#808080;letter-spacing:2.322px;left:391.00px;top:1015.70px;">486</span>
<span class="t" style="font-size:29px;color:#ffc66d;letter-spacing:-0.436px;left:452.50px;top:1015.70px;">lda</span>
<span class="t" style="font-size:29px;color:#9876aa;font-weight:bold;letter-spacing:-0.141px;left:499.00px;top:1015.70px;">gamepad<span class="ub">_</span>player<span class="ub">_</span>1</span>
<span class="t" style="font-size:29px;color:#808080;letter-spacing:2.172px;left:390.00px;top:1061.70px;">586</span>
<span class="t" style="font-size:29px;color:#ffc66d;letter-spacing:-0.936px;left:451.30px;top:1061.70px;">lda</span>
<span class="t" style="font-size:29px;color:#9876aa;font-weight:bold;letter-spacing:-0.154px;left:497.20px;top:1061.70px;">gamepad<span class="ub">_</span>player<span class="ub">_</span>1</span>
<span class="t" style="font-size:29px;color:#808080;letter-spacing:0.372px;left:390.00px;top:1107.70px;">591</span>
<span class="t" style="font-size:29px;color:#ffc66d;letter-spacing:-0.186px;left:446.30px;top:1107.70px;">lda</span>
<span class="t" style="font-size:29px;color:#9876aa;font-weight:bold;letter-spacing:-0.134px;left:493.00px;top:1107.70px;">gamepad<span class="ub">_</span>player<span class="ub">_</span>1</span>
<span class="t" style="font-size:29px;color:#c9d4ef;letter-spacing:2.172px;left:390.00px;top:1153.70px;">596</span>
<span class="t" style="font-size:29px;color:#c9d4ef;letter-spacing:-0.936px;left:451.30px;top:1153.70px;">lda</span>
<span class="t" style="font-size:29px;color:#ffffff;font-weight:bold;letter-spacing:-0.154px;left:497.20px;top:1153.70px;">gamepad<span class="ub">_</span>player<span class="ub">_</span>1</span>
<div class="r" style="left:1162px;top:1048px;width:16px;height:140px;background:rgba(255,255,255,0.17);"></div>
<div class="r" style="left:1180px;top:908px;width:116px;height:282px;background:#313335;"></div>
<div class="r" style="left:1296px;top:908px;width:942px;height:282px;background:#2b2b2b;"></div>
<div class="r" style="left:1180px;top:1002px;width:116px;height:44px;background:#323232;"></div>
<div class="r" style="left:1296px;top:1002px;width:942px;height:44px;background:#323232;"></div>
<div class="r" style="left:1392px;top:1002px;width:256px;height:44px;background:#344134;"></div>
<span class="t" style="font-size:24px;color:#606366;font-family:'DejaVu Sans Mono', 'Liberation Mono', monospace;letter-spacing:-1.199px;left:1206.50px;top:925.60px;">594</span>
<span class="t" style="font-size:27px;color:#ffc66d;font-family:'DejaVu Sans Mono', 'Liberation Mono', monospace;letter-spacing:-0.255px;left:1360.00px;top:922.50px;">jsr</span>
<span class="t" style="font-size:27px;color:#9876aa;font-family:'DejaVu Sans Mono', 'Liberation Mono', monospace;font-style:italic;letter-spacing:-0.255px;left:1424.00px;top:922.50px;">player<span class="um">_</span>1<span class="um">_</span>down</span>
<span class="t" style="font-size:24px;color:#606366;font-family:'DejaVu Sans Mono', 'Liberation Mono', monospace;letter-spacing:-1.199px;left:1206.50px;top:969.60px;">595</span>
<span class="t" style="font-size:27px;color:#a9b7c6;font-family:'DejaVu Sans Mono', 'Liberation Mono', monospace;letter-spacing:-0.255px;left:1328.00px;top:966.50px;">:</span>
<span class="t" style="font-size:24px;color:#a4a3a3;font-family:'DejaVu Sans Mono', 'Liberation Mono', monospace;letter-spacing:-1.199px;left:1206.50px;top:1013.60px;">596</span>
<span class="t" style="font-size:27px;color:#ffc66d;font-family:'DejaVu Sans Mono', 'Liberation Mono', monospace;letter-spacing:-0.255px;left:1328.00px;top:1010.50px;">lda</span>
<span class="t" style="font-size:27px;color:#9876aa;font-family:'DejaVu Sans Mono', 'Liberation Mono', monospace;font-style:italic;letter-spacing:-0.255px;left:1392.00px;top:1010.50px;">gamepad<span class="um">_</span>player<span class="um">_</span>1</span>
<span class="t" style="font-size:24px;color:#606366;font-family:'DejaVu Sans Mono', 'Liberation Mono', monospace;letter-spacing:-1.199px;left:1206.50px;top:1057.60px;">597</span>
<span class="t" style="font-size:27px;color:#ffc66d;font-family:'DejaVu Sans Mono', 'Liberation Mono', monospace;letter-spacing:-0.255px;left:1328.00px;top:1054.50px;">and</span>
<span class="t" style="font-size:27px;color:#a9b7c6;font-family:'DejaVu Sans Mono', 'Liberation Mono', monospace;letter-spacing:-0.255px;left:1392.00px;top:1054.50px;">#</span>
<span class="t" style="font-size:27px;color:#9876aa;font-family:'DejaVu Sans Mono', 'Liberation Mono', monospace;font-style:italic;letter-spacing:-0.255px;left:1408.00px;top:1054.50px;">PAD<span class="um">_</span>A</span>
<span class="t" style="font-size:24px;color:#606366;font-family:'DejaVu Sans Mono', 'Liberation Mono', monospace;letter-spacing:-1.199px;left:1206.50px;top:1101.60px;">598</span>
<span class="t" style="font-size:27px;color:#ffc66d;font-family:'DejaVu Sans Mono', 'Liberation Mono', monospace;letter-spacing:-0.255px;left:1328.00px;top:1098.50px;">beq</span>
<span class="t" style="font-size:27px;color:#a9b7c6;font-family:'DejaVu Sans Mono', 'Liberation Mono', monospace;letter-spacing:-0.255px;left:1392.00px;top:1098.50px;">:+</span>
<span class="t" style="font-size:24px;color:#606366;font-family:'DejaVu Sans Mono', 'Liberation Mono', monospace;letter-spacing:-1.199px;left:1206.50px;top:1145.60px;">599</span>
<span class="t" style="font-size:27px;color:#ffc66d;font-family:'DejaVu Sans Mono', 'Liberation Mono', monospace;letter-spacing:-0.255px;left:1360.00px;top:1142.50px;">jsr</span>
<span class="t" style="font-size:27px;color:#9876aa;font-family:'DejaVu Sans Mono', 'Liberation Mono', monospace;font-style:italic;letter-spacing:-0.255px;left:1424.00px;top:1142.50px;">player<span class="um">_</span>1<span class="um">_</span>a</span>
<svg class="i" style="left:0;top:0" width="2258" height="1298" viewBox="0 0 2258 1298"><circle cx="1273.6" cy="936" r="9.6" fill="#ab8233"/><path d="M1271.6999999999998,932.6 V940.2 H1277.1999999999998" fill="none" stroke="#65501f" stroke-width="1.4"/><rect x="1285.1000000000001" y="927" width="3.2" height="23" fill="#b4b4b4"/><path d="M1281.3,929.6 L1286.7,922 L1292.1000000000001,929.6 Z" fill="#b4b4b4"/></svg>
<svg class="i" style="left:0;top:0" width="2258" height="1298" viewBox="0 0 2258 1298"><circle cx="1273.6" cy="1156" r="9.6" fill="#ab8233"/><path d="M1271.6999999999998,1152.6 V1160.2 H1277.1999999999998" fill="none" stroke="#65501f" stroke-width="1.4"/><rect x="1285.1000000000001" y="1147" width="3.2" height="23" fill="#b4b4b4"/><path d="M1281.3,1149.6 L1286.7,1142 L1292.1000000000001,1149.6 Z" fill="#b4b4b4"/></svg>
<div class="r" style="left:1298px;top:1172px;width:430px;height:16px;background:#4d4d4d;"></div>
<div class="r" style="left:2220px;top:1024px;width:16px;height:52px;background:rgba(255,255,255,0.16);"></div>
<div class="r" style="left:20px;top:1190px;width:2218px;height:2px;background:#323232;"></div>
<div class="r" style="left:20px;top:1192px;width:2218px;height:44px;background:#3c3f41;"></div>
<div class="r" style="left:64px;top:1192px;width:122px;height:44px;background:#2d2f30;"></div>
<div class="r" style="left:20px;top:1236px;width:2218px;height:2px;background:#4b4948;"></div>
<svg class="i" style="left:0;top:0" width="2258" height="1298" viewBox="0 0 2258 1298"><circle cx="94.5" cy="1212.5" r="7.9" fill="none" stroke="#afb1b3" stroke-width="3.8"/><path d="M100.2,1218.2 L108,1226" stroke="#afb1b3" stroke-width="4.2"/><rect x="210" y="1206" width="4" height="3.6" fill="#afb1b3"/><rect x="216" y="1206" width="14" height="3.6" fill="#afb1b3"/><rect x="210" y="1212.5" width="4" height="3.6" fill="#afb1b3"/><rect x="216" y="1212.5" width="14" height="3.6" fill="#afb1b3"/><rect x="210" y="1219" width="4" height="3.6" fill="#afb1b3"/><rect x="216" y="1219" width="14" height="3.6" fill="#afb1b3"/><circle cx="371.4" cy="1213.5" r="10.6" fill="#afb1b3"/><rect x="369.4" y="1207" width="4" height="7.6" fill="#3c3f41"/><rect x="369.4" y="1216.4" width="4" height="3.4" fill="#3c3f41"/><rect x="544" y="1204" width="22" height="20" fill="#afb1b3"/><path d="M548,1207.8 L553.2,1212.6 L548,1217.4" fill="none" stroke="#3c3f41" stroke-width="2"/><rect x="554.4" y="1217.8" width="7.6" height="2" fill="#3c3f41"/><path d="M2050.8,1226.6 H2039 A11.7,11.7 0 1 1 2050.8,1215 Z" fill="none" stroke="#afb1b3" stroke-width="2.5"/></svg>
<span class="t" style="font-size:25px;color:#ffffff;letter-spacing:0.457px;left:117.20px;top:1202.80px;">Find</span>
<span class="t" style="font-size:25px;color:#bbbbbb;letter-spacing:0.327px;left:240.70px;top:1202.80px;">TODO</span>
<span class="t" style="font-size:25px;color:#bbbbbb;letter-spacing:0.33px;left:391.60px;top:1202.80px;">Problems</span>
<span class="t" style="font-size:25px;color:#bbbbbb;letter-spacing:0.826px;left:577.00px;top:1202.80px;">Terminal</span>
<span class="t" style="font-size:25px;color:#bbbbbb;letter-spacing:-0.546px;left:2060.20px;top:1203.20px;">Event</span>
<span class="t" style="font-size:25px;color:#bbbbbb;letter-spacing:0.296px;left:2128.70px;top:1203.20px;">Log</span>
<svg class="i" style="left:0;top:0" width="2258" height="1298" viewBox="0 0 2258 1298"><rect x="37" y="1247" width="18" height="18" fill="none" stroke="#b8babb" stroke-width="2"/><path d="M33,1250 V1269 H52" fill="none" stroke="#b8babb" stroke-width="2"/><rect x="2194" y="1256" width="16" height="12" fill="#afb1b3"/><path d="M2189.2,1256 V1252.2 A4.8,4.8 0 0 1 2198.8,1252.2 V1256" fill="none" stroke="#afb1b3" stroke-width="2.5"/></svg>
<span class="t" style="font-size:29px;color:#bbbbbb;letter-spacing:1.0px;left:74.20px;top:1244.00px;">IntelliJ</span>
<span class="t" style="font-size:29px;color:#bbbbbb;letter-spacing:-0.414px;left:171.80px;top:1244.00px;">IDEA</span>
<span class="t" style="font-size:29px;color:#bbbbbb;letter-spacing:-0.679px;left:247.80px;top:1244.00px;">2021.1.1</span>
<span class="t" style="font-size:29px;color:#bbbbbb;letter-spacing:0.182px;left:363.70px;top:1244.00px;">available</span>
<span class="t" style="font-size:29px;color:#bbbbbb;letter-spacing:1.143px;left:487.10px;top:1244.00px;">//</span>
<span class="t" style="font-size:29px;color:#bbbbbb;letter-spacing:0.447px;left:512.60px;top:1244.00px;">Update...</span>
<span class="t" style="font-size:29px;color:#bbbbbb;letter-spacing:-1.243px;left:641.00px;top:1244.00px;">(13</span>
<span class="t" style="font-size:29px;color:#bbbbbb;letter-spacing:0.843px;left:689.40px;top:1244.00px;">minutes</span>
<span class="t" style="font-size:29px;color:#bbbbbb;letter-spacing:-0.062px;left:805.30px;top:1244.00px;">ago)</span>
<span class="t" style="font-size:29px;color:#bbbbbb;letter-spacing:1.106px;left:1760.90px;top:1244.40px;">486:14</span>
<span class="t" style="font-size:29px;color:#bbbbbb;letter-spacing:0.872px;left:1879.00px;top:1244.40px;">LF</span>
<span class="t" style="font-size:29px;color:#bbbbbb;letter-spacing:1.718px;left:1937.00px;top:1244.40px;">UTF-8</span>
<span class="t" style="font-size:29px;color:#bbbbbb;left:2050.70px;top:1244.40px;">4</span>
<span class="t" style="font-size:29px;color:#bbbbbb;letter-spacing:-0.657px;left:2076.70px;top:1244.40px;">spaces</span>
</body></html>
